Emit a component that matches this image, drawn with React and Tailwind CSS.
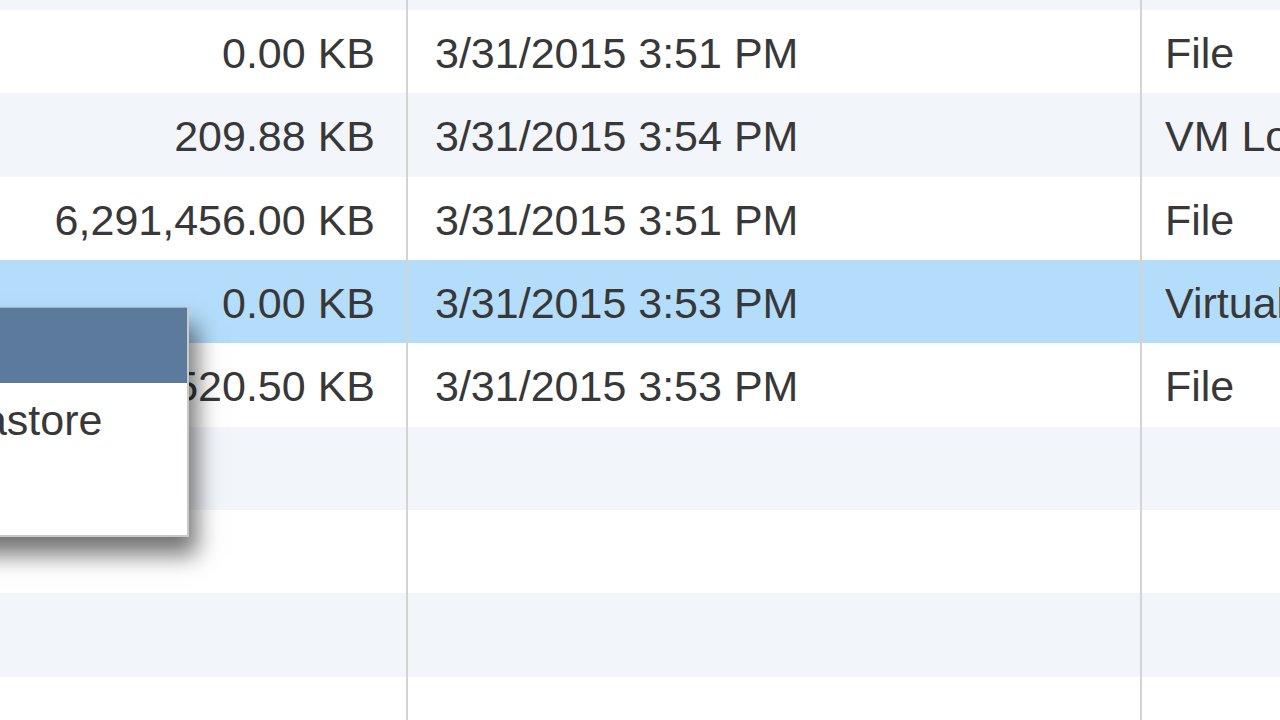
const rows = [
  { size: '', date: '', type: '', bg: 'bg-[#f2f5fa]', h: 'h-[10px]' },
  { size: '0.00 KB', date: '3/31/2015 3:51 PM', type: 'File', bg: 'bg-white' },
  { size: '209.88 KB', date: '3/31/2015 3:54 PM', type: 'VM Log File', bg: 'bg-[#f2f5fa]' },
  { size: '6,291,456.00 KB', date: '3/31/2015 3:51 PM', type: 'File', bg: 'bg-white' },
  { size: '0.00 KB', date: '3/31/2015 3:53 PM', type: 'Virtual Disk', bg: 'bg-[#b3ddfb]' },
  { size: '520.50 KB', date: '3/31/2015 3:53 PM', type: 'File', bg: 'bg-white' },
  { size: '', date: '', type: '', bg: 'bg-[#f2f5fa]' },
  { size: '', date: '', type: '', bg: 'bg-white' },
  { size: '', date: '', type: '', bg: 'bg-[#f2f5fa]' },
  { size: '', date: '', type: '', bg: 'bg-white' },
];

function Row({ row }) {
  return (
    <div className={`flex ${row.bg} ${row.h || 'h-[83.33px]'}`}>
      <div className="w-[408px] shrink-0 flex items-center justify-end pt-[4px] pr-[31px] border-r-2 border-[#d3d3d3]">
        {row.size}
      </div>
      <div className="w-[734px] shrink-0 flex items-center pt-[4px] pl-[27px] border-r-2 border-[#d3d3d3]">
        {row.date}
      </div>
      <div className="flex-1 flex items-center pt-[4px] pl-[23px] overflow-hidden whitespace-nowrap">
        {row.type}
      </div>
    </div>
  );
}

export default function App() {
  return (
    <div
      className="relative w-[1280px] h-[720px] overflow-hidden bg-white text-[43px] text-[#383838] leading-none"
      style={{ fontFamily: '"Liberation Sans", Arial, sans-serif' }}
    >
      {rows.map((row, i) => (
        <Row key={i} row={row} />
      ))}

      {/* context menu */}
      <div className="absolute left-[-211px] top-[307px] w-[400px] h-[230px] bg-white border-r-2 border-b-2 border-[#c9c9c9] shadow-[8px_18px_22px_rgba(0,0,0,0.55)]">
        <div className="h-[76px] bg-[#5b7a9c] border-t border-[#9fb3c8]"></div>
        <div className="pl-[127px] pt-[16px] whitespace-nowrap">Datastore</div>
      </div>
    </div>
  );
}
